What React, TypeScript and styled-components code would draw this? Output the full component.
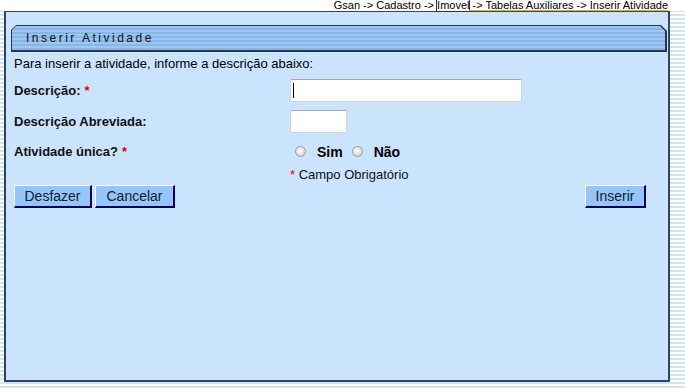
import React from 'react'
import styled, { createGlobalStyle } from 'styled-components'

const GlobalStyle = createGlobalStyle`
  html, body {
    margin: 0;
    padding: 0;
  }
  body {
    font-family: "Liberation Sans", Arial, sans-serif;
    background: repeating-linear-gradient(
      to bottom,
      #ffffff 0px,
      #ffffff 2px,
      #cfe3f4 2px,
      #cfe3f4 4px
    );
  }
`

const Page = styled.div`
  width: 685px;
  height: 388px;
  overflow: hidden;
`

const Breadcrumb = styled.div`
  height: 11px;
  display: flex;
  justify-content: flex-end;
  padding-right: 17px;
  font-size: 11px;
  line-height: 11px;
  color: #000;
  background: #fff;
  white-space: pre;
  margin-top: -3px;
  padding-top: 3px;
`

const Crumb = styled.span<{ $boxed?: boolean }>`
  outline: ${p => (p.$boxed ? '1px solid #333' : 'none')};
`

const CrumbTail = styled.span`
  box-shadow: inset 0 -1px 0 #f4b400;
`

const Panel = styled.div`
  margin-left: 4px;
  width: 666px;
  height: 371px;
  background: #cbe4fd;
  border: 2px solid #2f4560;
  border-top-width: 1px;
  padding: 13px 5px 0 5px;
  box-sizing: border-box;
`

const HeaderFrame = styled.div`
  height: 27px;
  width: 656px;
  background: #25364a;
  clip-path: polygon(5px 0, calc(100% - 6px) 0, 100% 6px, 100% 100%, 0 100%, 0 5px);
  padding: 1px 2px 2px 1px;
  box-sizing: border-box;
`

const HeaderInner = styled.div`
  height: 100%;
  display: flex;
  align-items: center;
  padding-left: 14px;
  font-size: 12px;
  letter-spacing: 2.5px;
  color: #111;
  clip-path: polygon(4px 0, calc(100% - 5px) 0, 100% 5px, 100% 100%, 0 100%, 0 4px);
  background: repeating-linear-gradient(
    to bottom,
    #9dc6f1 0px,
    #9dc6f1 2px,
    #87b6e8 2px,
    #87b6e8 4px
  );
`

const Intro = styled.p`
  margin: 4px 0 0 3px;
  font-size: 13px;
  line-height: 16px;
  color: #000;
`

const FormGrid = styled.div`
  display: grid;
  grid-template-columns: 276px 1fr;
  margin-left: 3px;
  margin-top: 4px;
`

const Label = styled.div<{ $h: number }>`
  height: ${p => p.$h}px;
  display: flex;
  align-items: center;
  font-size: 13px;
  font-weight: bold;
  color: #111;
`

const Star = styled.span<{ $plain?: boolean }>`
  color: #e00000;
  margin-left: ${p => (p.$plain ? 0 : 4)}px;
  font-weight: ${p => (p.$plain ? 'normal' : 'bold')};
`

const Field = styled.div<{ $h: number }>`
  height: ${p => p.$h}px;
  display: flex;
  align-items: center;
  position: relative;
`

const TextInput = styled.input<{ $w: number }>`
  width: ${p => p.$w}px;
  height: 23px;
  box-sizing: border-box;
  border: 1px solid #d4d4d4;
  border-top-color: #a9a9a9;
  border-radius: 2px;
  background: #fff;
  padding: 0 3px;
  font-family: "Liberation Sans", Arial, sans-serif;
  font-size: 12px;
  outline: none;
  caret-color: transparent;
`

const Caret = styled.span`
  position: absolute;
  left: 3px;
  top: 50%;
  width: 1px;
  height: 15px;
  margin-top: -8px;
  background: #000;
`

const RadioGroup = styled.div`
  display: flex;
  align-items: center;
  padding-left: 5px;
`

const Radio = styled.span`
  width: 11px;
  height: 11px;
  border-radius: 50%;
  border: 1px solid #9a9a9a;
  background: radial-gradient(circle at 45% 40%, #ffffff 0%, #e6e6e6 45%, #c4c4c4 100%);
  box-sizing: border-box;
  display: inline-block;
`

const RadioText = styled.span`
  font-size: 14px;
  font-weight: bold;
  color: #000;
  margin: 0 9px 0 11px;
`

const Required = styled.div`
  font-size: 13px;
  color: #111;
`

const Actions = styled.div`
  display: flex;
  align-items: center;
  gap: 3px;
  margin: 2px 0 0 3px;
  width: 632px;
`

const Spacer = styled.div`
  flex: 1;
`

const Button = styled.button<{ $w: number }>`
  width: ${p => p.$w}px;
  height: 23px;
  box-sizing: border-box;
  background: #93c6fa;
  border-style: solid;
  border-width: 1px 2px 2px 1px;
  border-color: #ffffff #00005c #00005c #ffffff;
  font-family: "Liberation Sans", Arial, sans-serif;
  font-size: 14px;
  color: #1a1a1a;
  padding: 0;
  cursor: pointer;
`

export default function App() {
  return (
    <Page>
      <GlobalStyle />
      <Breadcrumb>
        <Crumb>{'Gsan -> Cadastro -> '}</Crumb>
        <Crumb $boxed>Imovel</Crumb>
        <CrumbTail>{' -> Tabelas Auxiliares -> Inserir Atividade'}</CrumbTail>
      </Breadcrumb>
      <Panel>
        <HeaderFrame>
          <HeaderInner>Inserir Atividade</HeaderInner>
        </HeaderFrame>
        <Intro>Para inserir a atividade, informe a descrição abaixo:</Intro>
        <FormGrid>
          <Label $h={29}>
            Descrição:<Star>*</Star>
          </Label>
          <Field $h={29}>
            <TextInput $w={232} type="text" />
            <Caret />
          </Field>
          <Label $h={33}>Descrição Abreviada:</Label>
          <Field $h={33}>
            <TextInput $w={57} type="text" />
          </Field>
          <Label $h={27}>
            Atividade única?<Star>*</Star>
          </Label>
          <Field $h={27}>
            <RadioGroup>
              <Radio />
              <RadioText>Sim</RadioText>
              <Radio />
              <RadioText>Não</RadioText>
            </RadioGroup>
          </Field>
          <div />
          <Field $h={18}>
            <Required>
              <Star $plain>*</Star> Campo Obrigatório
            </Required>
          </Field>
        </FormGrid>
        <Actions>
          <Button $w={78}>Desfazer</Button>
          <Button $w={80}>Cancelar</Button>
          <Spacer />
          <Button $w={61}>Inserir</Button>
        </Actions>
      </Panel>
    </Page>
  )
}
